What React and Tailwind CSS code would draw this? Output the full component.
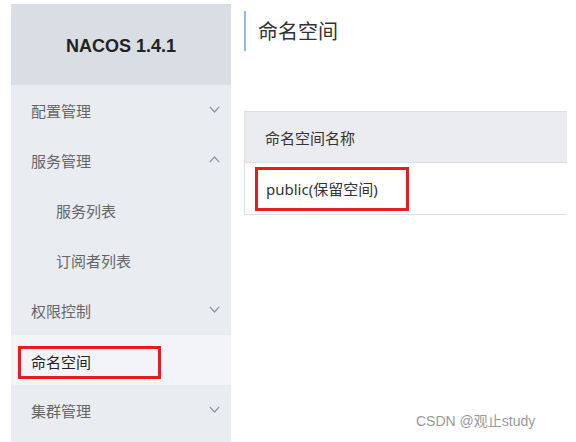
import React from 'react';

const font = { fontFamily: '"Noto Sans", "Noto Sans CJK SC", sans-serif' };

function Chevron({ up }) {
  return (
    <svg width="11" height="7" viewBox="0 0 11 7" className="text-[#8a93a6]">
      <path d={up ? 'M0.8 6.2 L5.5 1 L10.2 6.2' : 'M0.8 0.8 L5.5 6 L10.2 0.8'} fill="none" stroke="currentColor" strokeWidth="1.2" />
    </svg>
  );
}

const menu = [
  { label: '配置管理', arrow: 'down' },
  { label: '服务管理', arrow: 'up' },
  { label: '服务列表', sub: true },
  { label: '订阅者列表', sub: true },
  { label: '权限控制', arrow: 'down' },
  { label: '命名空间', active: true },
  { label: '集群管理', arrow: 'down' },
];

export default function App() {
  return (
    <div className="relative w-[576px] h-[442px] bg-white overflow-hidden flex" style={font}>
      <div className="ml-[11px] mt-[4px] w-[220px] shrink-0 flex flex-col bg-[#e9ecf1]">
        <div className="h-[81px] bg-[#d9dde4] flex items-center justify-center pt-[4px]">
          <span className="text-[18px] font-bold text-[#222]" style={{ fontFamily: '"Liberation Sans", Arial, sans-serif' }}>NACOS 1.4.1</span>
        </div>
        {menu.map(item => (
          <div
            key={item.label}
            className={`h-[50px] flex items-center justify-between pr-[11px] pt-[3px] ${item.active ? 'bg-[#f3f4f7]' : ''} ${item.sub ? 'pl-[45px]' : 'pl-[20px]'}`}
          >
            {item.active ? (
              <span className="border-[3px] border-[#e51c23] ml-[-13px] pl-[10px] pr-[67px] h-[33px] flex items-center text-[15px] text-[#222] mt-[2px]">
                {item.label}
              </span>
            ) : (
              <span className="text-[15px] text-[#666]">{item.label}</span>
            )}
            {item.arrow && (
              <span className="mb-[5px]">
                <Chevron up={item.arrow === 'up'} />
              </span>
            )}
          </div>
        ))}
        <div className="flex-1" />
      </div>

      <div className="flex-1 pl-[13px] pt-[11px]">
        <div className="border-l-[2px] border-[#8cbde6] h-[40px] flex items-center pl-[12px] pt-[2px]">
          <span className="text-[20px] text-[#333]">命名空间</span>
        </div>
        <div className="mt-[60px] border border-r-0 border-[#dcdee3] w-[323px]">
          <div className="h-[51px] bg-[#ebecf0] border-b border-[#dcdee3] flex items-center pl-[20px] pt-[2px]">
            <span className="text-[15px] text-[#333]">命名空间名称</span>
          </div>
          <div className="h-[51px] flex items-center pl-[10px]">
            <span className="border-[3px] border-[#e51c23] h-[44px] w-[154px] flex items-center pl-[8px] pt-[2px] text-[15px] text-[#333]">
              public(保留空间)
            </span>
          </div>
        </div>
      </div>

      <div className="absolute left-[416px] top-[411px] text-[14px] text-[#999]" style={{ fontFamily: '"Liberation Sans", "Noto Sans CJK SC", sans-serif' }}>
        CSDN @观止study
      </div>
    </div>
  );
}
